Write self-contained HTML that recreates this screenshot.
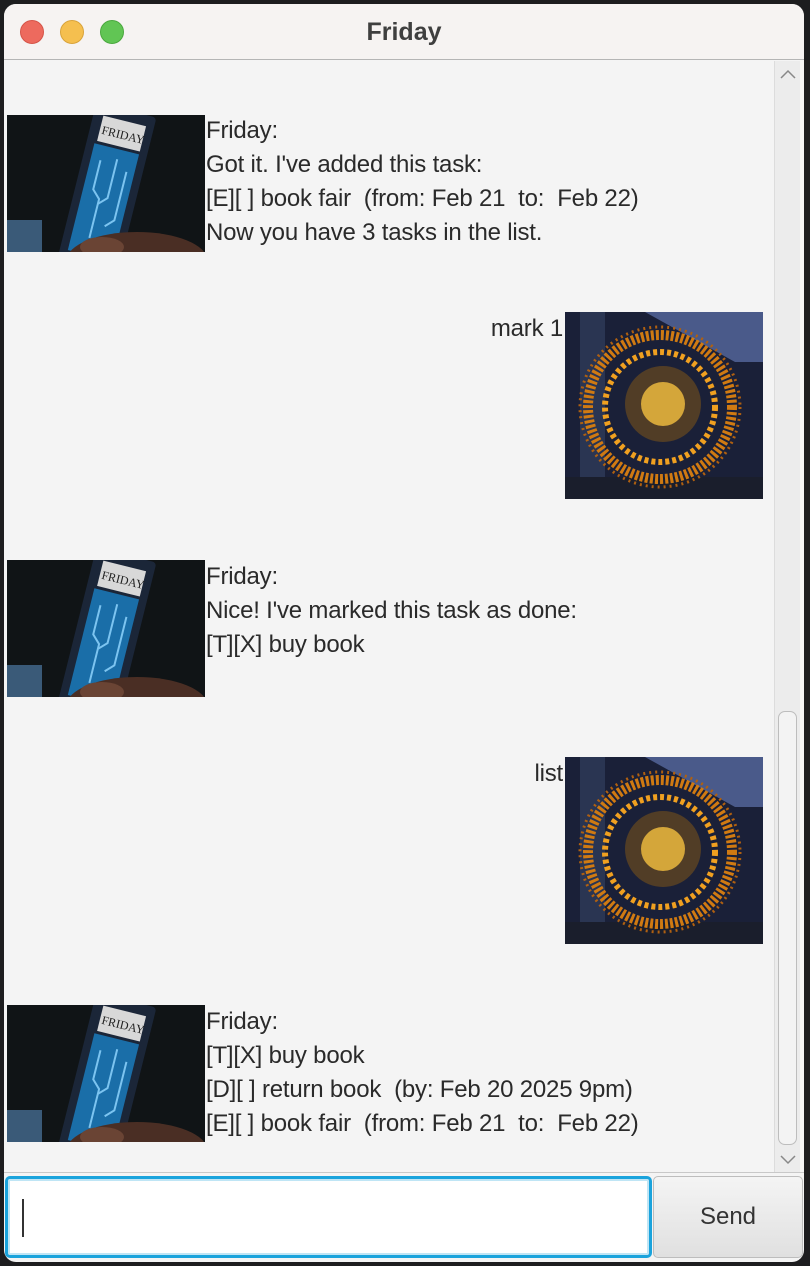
<!DOCTYPE html>
<html><head><meta charset="utf-8"><style>
*{margin:0;padding:0;box-sizing:border-box}
body{width:810px;height:1266px;background:#1d1d1f;position:relative;overflow:hidden;font-family:"Liberation Sans",sans-serif}
.win{position:absolute;left:4px;top:4px;width:800px;height:1258px;background:#f4f4f4;border-radius:12px;overflow:hidden}
.title{position:absolute;left:0;top:0;width:800px;height:56px;background:#f6f3f2;border-bottom:1px solid #b5b5b5;text-align:center;font-weight:bold;font-size:25px;color:#3f3f3f;line-height:56px}
.dot{position:absolute;top:16px;width:24px;height:24px;border-radius:50%}
.t{position:absolute;font-size:24px;color:#2a2a2a;line-height:34px;white-space:pre;letter-spacing:-0.2px}
.img{position:absolute;width:198px;overflow:hidden}
.sb{position:absolute;left:770px;top:57px;width:26px;height:1112px;background:#ececec;border-left:1px solid #dcdcdc}
.thumb{position:absolute;left:3px;top:650px;width:19px;height:434px;border:1px solid #bdbdbd;border-radius:7px;background:#f3f3f3}
.input{position:absolute;left:1px;top:1172px;width:647px;height:82px;background:#fff;border:3px solid #1aa3dc;border-radius:5px;box-shadow:0 0 0 2px #bfe5f5 inset}
.caret{position:absolute;left:14px;top:20px;width:1.5px;height:38px;background:#333}
.send{position:absolute;left:649px;top:1172px;width:150px;height:82px;border:1px solid #bdbdbd;border-radius:5px;background:linear-gradient(#f4f4f4,#e0e0e0);text-align:center;line-height:80px;font-size:24px;color:#333}
.bottom{position:absolute;left:0;top:1168px;width:800px;height:1px;background:#c8c8c8}
</style></head><body>
<div class="win">
<div class="title">Friday
<div class="dot" style="left:16px;background:#ed6a5e;border:1px solid #d55448"></div>
<div class="dot" style="left:56px;background:#f5bf4f;border:1px solid #d9a33a"></div>
<div class="dot" style="left:96px;background:#61c554;border:1px solid #4aa83e"></div>
</div>

<svg width="0" height="0" style="position:absolute">
<defs>
<g id="fri">
<rect width="198" height="137" fill="#101416"/>
<rect x="0" y="105" width="35" height="32" fill="#3a5a78"/>
<g transform="rotate(14 110 70)">
<rect x="70" y="-5" width="62" height="160" rx="4" fill="#1b2638"/>
<rect x="78" y="35" width="46" height="110" fill="#1a6ea8"/>
<path d="M88 50 v30 l8 8 v40 M104 45 v40 l-8 8 M116 55 v50 l-8 8" stroke="#7cc4f0" stroke-width="2" fill="none"/>
<rect x="80" y="6" width="44" height="26" fill="#d8d8d8"/>
<text x="82" y="24" font-size="12" font-family="Liberation Serif" fill="#222">FRIDAY</text>
</g>
<ellipse cx="130" cy="145" rx="70" ry="28" fill="#4a2e24"/>
<ellipse cx="95" cy="132" rx="22" ry="10" fill="#6a4434"/>
</g>
<g id="usr">
<rect width="198" height="187" fill="#1a2038"/>
<path d="M80 0 L198 0 198 50 170 50 Z" fill="#4a5a8a"/>
<rect x="15" y="0" width="25" height="187" fill="#2a3552"/>
<rect x="0" y="165" width="198" height="22" fill="#1a1e2c"/>
<circle cx="95" cy="95" r="72" fill="none" stroke="#d07a12" stroke-width="10" stroke-dasharray="3 2"/>
<circle cx="95" cy="95" r="55" fill="none" stroke="#f0a020" stroke-width="6" stroke-dasharray="4 3"/>
<circle cx="98" cy="92" r="38" fill="#6a4a20" opacity="0.7"/>
<circle cx="98" cy="92" r="22" fill="#f5c040" opacity="0.8"/>
<circle cx="95" cy="95" r="80" fill="none" stroke="#b06010" stroke-width="3" stroke-dasharray="2 4"/>
</g>
</defs></svg>

<svg class="img" style="left:3px;top:111px;height:137px" viewBox="0 0 198 137"><use href="#fri"/></svg>
<div class="t" style="left:202px;top:110px">Friday:
Got it. I've added this task:
[E][ ] book fair  (from: Feb 21  to:  Feb 22)
Now you have 3 tasks in the list.</div>

<div class="t" style="right:241px;top:308px">mark 1</div>
<svg class="img" style="left:561px;top:308px;height:187px" viewBox="0 0 198 187"><use href="#usr"/></svg>

<svg class="img" style="left:3px;top:556px;height:137px" viewBox="0 0 198 137"><use href="#fri"/></svg>
<div class="t" style="left:202px;top:556px">Friday:
Nice! I've marked this task as done:
[T][X] buy book</div>

<div class="t" style="right:241px;top:753px">list</div>
<svg class="img" style="left:561px;top:753px;height:187px" viewBox="0 0 198 187"><use href="#usr"/></svg>

<svg class="img" style="left:3px;top:1001px;height:137px" viewBox="0 0 198 137"><use href="#fri"/></svg>
<div class="t" style="left:202px;top:1001px">Friday:
[T][X] buy book
[D][ ] return book  (by: Feb 20 2025 9pm)
[E][ ] book fair  (from: Feb 21  to:  Feb 22)</div>

<div class="sb"><div class="thumb"></div>
<svg style="position:absolute;left:5px;top:8px" width="16" height="10"><path d="M1 9 L8 2 L15 9" stroke="#888" stroke-width="1.5" fill="none"/></svg>
<svg style="position:absolute;left:5px;top:1094px" width="16" height="10"><path d="M1 1 L8 8 L15 1" stroke="#888" stroke-width="1.5" fill="none"/></svg>
</div>
<div class="bottom"></div>
<div class="input"><div class="caret"></div></div>
<div class="send">Send</div>
</div>
</body></html>
